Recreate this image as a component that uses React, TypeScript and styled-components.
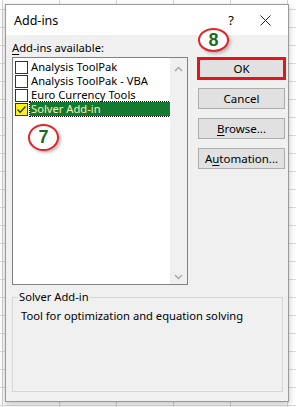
import React from "react";
import styled, { createGlobalStyle } from "styled-components";

const GlobalStyle = createGlobalStyle`
  html, body {
    margin: 0;
    padding: 0;
  }
  body {
    width: 296px;
    height: 407px;
    overflow: hidden;
    font-family: "Noto Sans", "Open Sans", sans-serif;
    background-color: #ffffff;
    background-image:
      repeating-linear-gradient(90deg, transparent 0 2px, #d4d4d4 2px 3px, transparent 3px 57px),
      repeating-linear-gradient(180deg, transparent 0 9px, #dadada 9px 10px, transparent 10px 18px);
  }
`;

const Dialog = styled.div`
  position: relative;
  box-sizing: border-box;
  width: 284px;
  height: 398px;
  margin: 4px 0 0 5px;
  border: 1px solid #9a9a9a;
  background: #f0f0f0;
  box-shadow: 0 2px 6px rgba(0, 0, 0, 0.25);
  display: flex;
  flex-direction: column;
  color: #000;
`;

const TitleBar = styled.div`
  height: 30px;
  background: #ffffff;
  display: flex;
  align-items: center;
  padding-left: 8px;
`;

const Title = styled.span`
  flex: 1;
  font-size: 12.5px;
`;

const TitleButton = styled.span<{ $width: number }>`
  width: ${({ $width }) => $width}px;
  height: 30px;
  display: flex;
  align-items: center;
  justify-content: center;
  font-size: 13px;
`;

const Body = styled.div`
  flex: 1;
  display: flex;
  flex-direction: column;
  padding: 5px 5px 9px 6px;
  font-size: 11.2px;
`;

const TopRow = styled.div`
  display: flex;
  gap: 9px;
`;

const LeftColumn = styled.div`
  display: flex;
  flex-direction: column;
`;

const Label = styled.div`
  line-height: 16px;
  height: 17px;
`;

const Accel = styled.span`
  text-decoration: underline;
  text-underline-offset: 2px;
`;

const ListBox = styled.div`
  box-sizing: border-box;
  width: 176px;
  height: 228px;
  border: 1px solid #828282;
  background: #ffffff;
  display: flex;
`;

const Items = styled.div`
  flex: 1;
  padding-top: 2px;
`;

const Row = styled.div`
  height: 14px;
  display: flex;
  align-items: center;
  padding-left: 2px;
`;

const CheckBox = styled.span<{ $checked?: boolean }>`
  box-sizing: border-box;
  width: 13px;
  height: 13px;
  border: 1px solid #333;
  background: ${({ $checked }) => ($checked ? "#f7f21a" : "#ffffff")};
  display: flex;
  align-items: center;
  justify-content: center;
  flex-shrink: 0;
`;

const ItemText = styled.span<{ $selected?: boolean }>`
  flex: 1;
  margin-left: 2px;
  height: 14px;
  line-height: 14px;
  padding-left: 1px;
  box-sizing: border-box;
  white-space: nowrap;
  background: ${({ $selected }) => ($selected ? "#137a30" : "transparent")};
  color: ${({ $selected }) => ($selected ? "#f5f5b8" : "#000")};
  outline: ${({ $selected }) => ($selected ? "1px dotted #000" : "none")};
`;

const ScrollBar = styled.div`
  width: 17px;
  background: #f0f0f0;
  display: flex;
  flex-direction: column;
  justify-content: space-between;
  align-items: center;
  padding: 8px 0 4px;
`;

const RightColumn = styled.div`
  display: flex;
  flex-direction: column;
  gap: 9px;
  padding-top: 17px;
`;

const Button = styled.div<{ $highlight?: boolean }>`
  box-sizing: border-box;
  width: ${({ $highlight }) => ($highlight ? 89 : 87)}px;
  height: ${({ $highlight }) => ($highlight ? 23 : 21)}px;
  margin-left: ${({ $highlight }) => ($highlight ? 0 : 1)}px;
  border: ${({ $highlight }) => ($highlight ? "3px solid #e3151c" : "1px solid #adadad")};
  background: #e1e1e1;
  display: flex;
  align-items: center;
  justify-content: center;
  font-size: 11.5px;
  margin-bottom: ${({ $highlight }) => ($highlight ? -1 : 0)}px;
`;

const GroupBox = styled.fieldset`
  margin: 5px 0 0;
  padding: 4px 8px 0;
  flex: 1;
  border: 1px solid #d6d6d6;
`;

const Legend = styled.legend`
  padding: 0 1px;
  margin-left: -3px;
  line-height: 14px;
`;

const Description = styled.div`
  line-height: 16px;
`;

const Marker = styled.div<{ $left: number; $top: number; $w: number; $h: number }>`
  position: absolute;
  left: ${({ $left }) => $left}px;
  top: ${({ $top }) => $top}px;
  width: ${({ $w }) => $w}px;
  height: ${({ $h }) => $h}px;
  box-sizing: border-box;
  border: 2px solid #e0262a;
  border-radius: 50%;
  background: #ffffff;
  box-shadow: 2px 2px 3px rgba(120, 120, 120, 0.45);
  display: flex;
  align-items: center;
  justify-content: center;
  font-family: "Liberation Sans", Arial, sans-serif;
  font-weight: bold;
  font-size: 18px;
  color: #1e6a23;
`;

const Chevron = ({ up }: { up?: boolean }) => (
  <svg width="9" height="6" viewBox="0 0 9 6">
    <path
      d={up ? "M1 5 L4.5 1.5 L8 5" : "M1 1 L4.5 4.5 L8 1"}
      fill="none"
      stroke="#a6a6a6"
      strokeWidth="1.4"
    />
  </svg>
);

const Check = () => (
  <svg width="11" height="11" viewBox="0 0 11 11">
    <path d="M1.5 5.5 L4.2 8.2 L9.5 2.5" fill="none" stroke="#333" strokeWidth="1.3" />
  </svg>
);

const CloseIcon = () => (
  <svg width="11" height="11" viewBox="0 0 11 11">
    <path d="M0.5 0.5 L10.5 10.5 M10.5 0.5 L0.5 10.5" stroke="#222" strokeWidth="1" />
  </svg>
);

const addIns = [
  { name: "Analysis ToolPak", checked: false },
  { name: "Analysis ToolPak - VBA", checked: false },
  { name: "Euro Currency Tools", checked: false },
  { name: "Solver Add-in", checked: true },
];

export default function App() {
  return (
    <>
      <GlobalStyle />
      <Dialog>
        <TitleBar>
          <Title>Add-ins</Title>
          <TitleButton $width={22}>?</TitleButton>
          <TitleButton $width={46}>
            <CloseIcon />
          </TitleButton>
        </TitleBar>
        <Body>
          <TopRow>
            <LeftColumn>
              <Label>
                <Accel>A</Accel>dd-ins available:
              </Label>
              <ListBox>
                <Items>
                  {addIns.map((a) => (
                    <Row key={a.name}>
                      <CheckBox $checked={a.checked}>{a.checked && <Check />}</CheckBox>
                      <ItemText $selected={a.checked}>{a.name}</ItemText>
                    </Row>
                  ))}
                </Items>
                <ScrollBar>
                  <Chevron up />
                  <Chevron />
                </ScrollBar>
              </ListBox>
            </LeftColumn>
            <RightColumn>
              <Button $highlight>OK</Button>
              <Button>Cancel</Button>
              <Button>
                <Accel>B</Accel>rowse...
              </Button>
              <Button>
                A<Accel>u</Accel>tomation...
              </Button>
            </RightColumn>
          </TopRow>
          <GroupBox>
            <Legend>Solver Add-in</Legend>
            <Description>Tool for optimization and equation solving</Description>
          </GroupBox>
        </Body>
        <Marker $left={192} $top={23} $w={31} $h={24}>8</Marker>
        <Marker $left={22} $top={119} $w={31} $h={27}>7</Marker>
      </Dialog>
    </>
  );
}
